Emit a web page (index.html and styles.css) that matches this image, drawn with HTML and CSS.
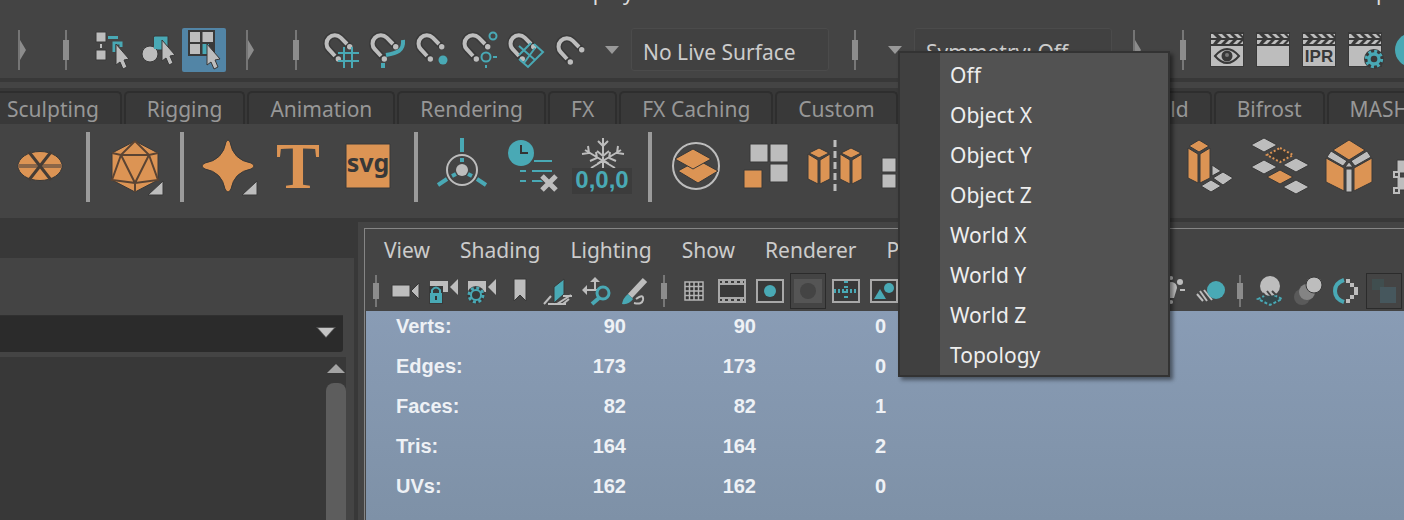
FILE: index.html
```html
<!DOCTYPE html>
<html lang="en">
<head>
<meta charset="utf-8">
<title>Modeling workspace</title>
<link rel="stylesheet" href="styles.css">
</head>
<body>
<svg class="defs" aria-hidden="true">
  <defs>
    <symbol id="cursor" viewBox="0 0 16 28"><path class="g edge" d="M1 1 14 16 9 17 12 24 8 26 5 19 1 22Z"/></symbol>
    <symbol id="magnet" viewBox="0 0 44 44">
      <path class="shade" d="M18 31 9 21.5A8.3 8.3 0 0 1 20.7 9.7L30 19"/>
      <path class="pipe" d="M15 28 9 21.5A8.3 8.3 0 0 1 20.7 9.7L27 16"/>
      <circle class="g" cx="18.3" cy="31" r="2.7"/><circle class="g" cx="29.7" cy="18.8" r="2.7"/>
    </symbol>
    <symbol id="clapper" viewBox="0 0 44 44">
      <path class="dark" d="M3 4H37V39H3Z"/>
      <path class="g" d="M4 18H36V38H4ZM4 6h2l4 4H4ZM11 6h4l4 4h-4ZM19 6h4l4 4h-4ZM27 6h4l4 4h-4ZM34 6h2v2ZM4 16v-4h5l-3 4ZM14 12h4l-4 4h-4ZM22 12h4l-4 4h-4ZM30 12h4l-4 4h-4ZM36 13v3h-3Z"/>
    </symbol>
    <symbol id="gear" viewBox="0 0 24 24">
      <circle cx="12" cy="12" r="9" class="dark"/>
      <circle cx="12" cy="12" r="9" fill="none" stroke="#49a9b5" stroke-width="4" stroke-dasharray="3.500 3.560"/>
      <circle cx="12" cy="12" r="6" fill="none" stroke="#49a9b5" stroke-width="4"/>
    </symbol>
    <symbol id="handle" viewBox="0 0 12 40"><path fill="#757575" d="M2 0h2v40H2Z"/><path fill="#8c8c8c" d="M4 10 10 20 4 30Z"/></symbol>
    <symbol id="grip" viewBox="0 0 12 40"><path fill="#777" d="M5 0h2v40H5Z"/><path fill="#8c8c8c" d="M3 10h6v20H3Z"/></symbol>
    <symbol id="smallgrip" viewBox="0 0 12 32"><path fill="#777" d="M5 0h2v32H5Z"/><path fill="#8c8c8c" d="M3 8h6v16H3Z"/></symbol>
    <symbol id="screen" viewBox="0 0 36 36"><path d="M5 7H31V29H5Z" fill="#393939" stroke="#a8a8a8" stroke-width="2"/></symbol>
    <symbol id="camera" viewBox="0 0 36 36"><path class="g" d="M5 8H23V19H5ZM25 14 33 6V22Z"/></symbol>
  </defs>
</svg>

<nav class="menubar" aria-label="Main menu"><a class="display" href="#">Display</a><a class="help" href="#">Help</a></nav>

<header class="status">
  <span class="cell lead"><svg class="bar"><use href="#handle"/></svg></span>
  <span class="cell"><svg class="bar"><use href="#grip"/></svg></span>
  <button class="cell" aria-label="Select by hierarchy"><svg class="tool" viewBox="0 0 44 44">
    <path class="g edge" d="M6 4H16V14H6ZM6 22H16V32H6Z"/><path class="g" d="M10 16h2v4h-2Z"/>
    <path class="t" d="M18 8H28V11H18Z"/><path d="M24 24V15H31V19" fill="none" stroke="#49a9b5" stroke-width="3"/>
    <use href="#cursor" x="25" y="15" width="16" height="28"/></svg></button>
  <button class="cell" aria-label="Select by object"><svg class="tool" viewBox="0 0 44 44">
    <path class="t edge" d="M18 8H32V22H18Z"/><circle class="g edge" cx="14" cy="26" r="8"/><path class="t" d="M18 9h13v12H18Z"/>
    <use href="#cursor" x="25" y="11" width="16" height="28"/></svg></button>
  <button class="cell" aria-label="Select by component" aria-pressed="true"><svg class="tool on" viewBox="0 0 44 44">
    <path class="dark" d="M6 2H33V28H6Z"/><path class="g" d="M8 4H18V14H8ZM20.500 4H31V14H20.500ZM8 16H18V26H8Z"/><path class="t" d="M20.500 16H27V26H20.500Z"/>
    <use href="#cursor" x="24" y="15" width="16" height="28"/></svg></button>
  <span class="cell"><svg class="bar"><use href="#handle"/></svg></span>
  <span class="cell"><svg class="bar"><use href="#grip"/></svg></span>
  <button class="cell" aria-label="Snap to grids"><svg class="tool" viewBox="0 0 44 44"><use href="#magnet"/><path class="line" d="M24 19V40M32 19V40M18 25H39M18 33H39"/></svg></button>
  <button class="cell" aria-label="Snap to curves"><svg class="tool" viewBox="0 0 44 44"><use href="#magnet"/><path d="M37 12C38 23 31 25 20 27M17 35V40" fill="none" stroke="#49a9b5" stroke-width="4"/></svg></button>
  <button class="cell" aria-label="Snap to points"><svg class="tool" viewBox="0 0 44 44"><use href="#magnet"/><circle class="t" cx="31" cy="32" r="4.500"/></svg></button>
  <button class="cell" aria-label="Snap to projected center"><svg class="tool" viewBox="0 0 44 44"><use href="#magnet"/><g class="line"><circle cx="35" cy="8" r="3.500"/><circle cx="28" cy="29" r="4.500"/><path d="M35 29h4M28 37v3"/></g></svg></button>
  <button class="cell" aria-label="Snap to view planes"><svg class="tool" viewBox="0 0 44 44"><use href="#magnet"/><path class="line" d="M30 16 39 24 24 39 15 31M15 18 31 32M27 15 15 27M31 20 20 35"/></svg></button>
  <button class="cell" aria-label="Make live"><svg class="tool" viewBox="0 0 44 44"><use href="#magnet" x="2" y="3"/></svg></button>
  <button class="drop" aria-label="Live surface options"><svg class="caret" viewBox="0 0 14 8"><path fill="#999" d="M0 0H14L7 8Z"/></svg></button>
  <input class="field" aria-label="Live surface" value="No Live Surface" readonly>
  <span class="cell"><svg class="bar"><use href="#grip"/></svg></span>
  <button class="drop" aria-label="Symmetry options"><svg class="caret" viewBox="0 0 14 8"><path fill="#999" d="M0 0H14L7 8Z"/></svg></button>
  <input class="field sym" aria-label="Symmetry" value="Symmetry: Off" readonly>
  <span class="cell"><svg class="bar"><use href="#handle"/></svg></span>
  <span class="cell"><svg class="bar"><use href="#grip"/></svg></span>
  <button class="cell" aria-label="Render view"><svg class="tool" viewBox="0 0 44 44"><use href="#clapper"/><path d="M8 28Q20 14 32 28Q20 42 8 28Z" fill="#bdbdbd" stroke="#383838" stroke-width="2"/><circle cx="20" cy="28" r="5.500" fill="#383838"/><circle cx="20" cy="27" r="2" fill="#777"/></svg></button>
  <button class="cell" aria-label="Render frame"><svg class="tool" viewBox="0 0 44 44"><use href="#clapper"/></svg></button>
  <button class="cell" aria-label="IPR render"><svg class="tool" viewBox="0 0 44 44"><use href="#clapper"/><text class="ipr" x="20" y="34">IPR</text></svg></button>
  <button class="cell" aria-label="Render settings"><svg class="tool" viewBox="0 0 44 44"><use href="#clapper"/><circle class="dark" cx="29" cy="31" r="10"/><use href="#gear" x="19" y="21" width="20" height="20"/></svg></button>
  <button class="cell" aria-label="Hypershade"><svg class="tool" viewBox="0 0 44 44"><circle class="t" cx="21" cy="22" r="17"/></svg></button>
</header>

<nav class="tabs" aria-label="Shelves">
  <button class="tab first">Sculpting</button>
  <button class="tab">Rigging</button>
  <button class="tab">Animation</button>
  <button class="tab">Rendering</button>
  <button class="tab">FX</button>
  <button class="tab">FX Caching</button>
  <button class="tab">Custom</button>
  <span class="tab covered"></span>
  <button class="tab">Arnold</button>
  <button class="tab">Bifrost</button>
  <button class="tab">MASH</button>
</nav>

<section class="shelf" aria-label="Shelf tools">
  <button aria-label="Disc"><svg viewBox="0 0 60 60"><ellipse class="o edge" cx="30" cy="29" rx="22" ry="14.500"/><path d="M8 29H52" stroke="#8b6648" stroke-width="4"/><path d="M19 15 41 43M41 15 19 43" stroke="#443c36" stroke-width="3"/></svg></button>
  <i></i>
  <button aria-label="Platonic solid"><svg viewBox="0 0 60 60"><path class="o edge" d="M31 4 54 16V43L31 55 8 43V16Z"/><path d="M17 18H45L31 46ZM31 4 17 18 8 16M31 4 45 18 54 16M17 18 8 43 31 46V55M45 18 54 43 31 46" fill="none" stroke="#5b4433" stroke-width="2"/><path class="g edge" d="M59 44V58H44Z"/></svg></button>
  <i></i>
  <button aria-label="Super shape"><svg viewBox="0 0 60 60"><path class="o edge" d="M28 5Q30 1 32 5Q35 23 53 26Q59 29 53 32Q36 35 33 52Q30 58 27 52Q24 35 7 32Q1 29 7 26Q25 23 28 5Z"/><path class="g edge" d="M59 44V58H44Z"/></svg></button>
  <button aria-label="Type"><svg viewBox="0 0 60 60"><text class="type" x="30" y="51">T</text></svg></button>
  <button aria-label="SVG"><svg viewBox="0 0 60 60"><path class="o edge" d="M8 7H52V51H8Z"/><text class="svgt" x="30" y="35">svg</text></svg></button>
  <i></i>
  <button aria-label="Center pivot"><svg viewBox="0 0 60 60"><circle cx="30" cy="33" r="15" fill="none" stroke="#bdbdbd" stroke-width="2"/><circle class="g" cx="30" cy="33" r="6"/><path d="M30 1V15M6 48 15 42M54 48 45 42M30 21V25M20 39 24 37M40 39 36 37" stroke="#49a9b5" stroke-width="4"/></svg></button>
  <button aria-label="Delete history"><svg viewBox="0 0 60 60"><circle class="t" cx="19" cy="16" r="13"/><path d="M19 8V16H26" fill="none" stroke="#333" stroke-width="2"/><path class="line" d="M32 24H50M18 34H24M30 34H50M18 44H24M30 44H42"/><path d="M39 38 55 54M55 38 39 54" stroke="#444" stroke-width="7"/><path d="M40 39 54 53M54 39 40 53" stroke="#bdbdbd" stroke-width="5"/></svg></button>
  <button aria-label="Freeze transformations"><svg viewBox="0 0 60 60"><g fill="none" stroke="#bdbdbd" stroke-width="2"><path d="M31 1V33M13 13 43 31M49 13 19 31M26 4 31 9 36 4M10 17 17 16 16 9M52 17 45 16 46 9M25 14 31 19 37 14M18 24 25 21 24 15M44 24 37 21 38 15M25 27 31 23 37 27"/></g><path fill="#3c3c3c" d="M0 31H60V57H0Z"/><text class="zeros" x="30" y="51">0,0,0</text></svg></button>
  <i></i>
  <button aria-label="Boolean"><svg viewBox="0 0 60 60"><circle cx="30" cy="29" r="23" fill="none" stroke="#bdbdbd" stroke-width="2"/><path class="o edge" d="M12 34 32 23 52 34 32 46Z"/><path class="o edge" d="M9 22 27 12 45 22 27 32Z"/></svg></button>
  <button aria-label="Separate"><svg viewBox="0 0 60 60"><path class="g edge" d="M14 7H32V25H14ZM34 7H52V25H34ZM34 27H52V45H34Z"/><path class="o edge" d="M8 33H26V51H8Z"/></svg></button>
  <button aria-label="Mirror"><svg viewBox="0 0 60 60"><path class="o edge" d="M2 17 12 23V47L2 42ZM14 23 24 17V42L14 47ZM3 16 13 11 23 16 13 21ZM34 17 44 23V47L34 42ZM46 23 56 17V42L46 47ZM35 16 45 11 55 16 45 21Z"/><path d="M29 3V56" stroke="#bdbdbd" stroke-width="3" stroke-dasharray="7 4"/></svg></button>
  <button aria-label="Extract"><svg viewBox="0 0 60 60"><path class="g edge" d="M6 21H20V35H6ZM6 37H20V51H6Z"/></svg></button>
  <span class="gap"></span>
  <i></i>
  <button aria-label="Extrude"><svg viewBox="0 0 60 60"><path class="g edge" d="M32 28 41 34 32 39ZM31 43 41 49 31 55 21 49ZM43 35 53 41 43 48 33 41Z"/><path class="o edge" d="M8 11 18 17V46L8 41ZM20 17 30 11V41L20 46ZM9 9 19 3 29 9 19 15Z"/></svg></button>
  <button aria-label="Bridge"><svg viewBox="0 0 60 60"><path class="g edge" d="M14 1 27 8 14 15 1 8ZM14 23 27 30 14 37 1 30ZM46 21 59 28 46 35 33 28ZM46 43 59 50 46 57 33 50Z"/><path class="o edge" d="M30 33 43 40 30 47 17 40Z"/><path d="M30 11 43 18 30 25 17 18Z" fill="#3c3732" stroke="#dc9454" stroke-width="2" stroke-dasharray="2 2"/></svg></button>
  <button aria-label="Bevel"><svg viewBox="0 0 60 60"><path class="o edge" d="M29 3 45 13 29 23 13 13ZM6 21 24 31V54L6 45ZM34 31 52 21V45L34 54Z"/><path class="g edge" d="M26 32H32V55H26ZM11 14 27 24 23 29 7 20ZM47 14 31 24 35 29 51 20ZM29 25 33 30H25Z"/></svg></button>
  <button aria-label="Lattice"><svg viewBox="0 0 60 60"><path class="g edge" d="M7 23H30V36H7ZM7 40H30V53H7Z"/><path d="M4 35H9V40H4ZM4 51H9V56H4Z" fill="#444" stroke="#bdbdbd" stroke-width="2"/></svg></button>
</section>

<main class="work">
  <aside class="side">
    <div class="sidehead"></div>
    <div class="sidebody">
      <select class="picker" aria-label="Tool settings"><option></option></select>
      <div class="list">
        <div class="scroll"><svg class="up" viewBox="0 0 18 9"><path fill="#a3a3a3" d="M0 9 9 0 18 9Z"/></svg><div class="thumb"></div></div>
      </div>
    </div>
  </aside>
  <section class="panel" aria-label="Perspective view">
    <div class="frame">
      <nav class="panelmenu" aria-label="Panel menu"><a href="#">View</a><a href="#">Shading</a><a href="#">Lighting</a><a href="#">Show</a><a href="#">Renderer</a><a href="#">Panels</a></nav>
      <div class="paneltools">
        <i><svg><use href="#smallgrip"/></svg></i>
        <button aria-label="Select camera"><svg viewBox="0 0 36 36"><path class="g edge" d="M4 12H22V24H4ZM23 18 31 10V26Z"/></svg></button>
        <button aria-label="Lock camera"><svg viewBox="0 0 36 36"><use href="#camera" x="-1"/><path class="dark" d="M3 13h14v18H3Z"/><path class="g" d="M4 8H22V12H4Z"/><path class="t" d="M4 20H16V30H4Z"/><path d="M6 20V17Q10 12 14 17V20" fill="none" stroke="#49a9b5" stroke-width="2"/><path d="M10 23v4" stroke="#333" stroke-width="2"/></svg></button>
        <button aria-label="Camera attributes"><svg viewBox="0 0 36 36"><use href="#camera" x="-1"/><circle class="dark" cx="12" cy="22" r="9"/><circle cx="12" cy="22" r="7" fill="none" stroke="#49a9b5" stroke-width="3" stroke-dasharray="3 2.500"/><circle cx="12" cy="22" r="5" fill="none" stroke="#49a9b5" stroke-width="2"/></svg></button>
        <button aria-label="Bookmarks"><svg viewBox="0 0 36 36"><path class="g edge" d="M12 6H24V28L18 22 12 28Z"/></svg></button>
        <button aria-label="Image plane"><svg viewBox="0 0 36 36"><path d="M4 31 11 23M8 31H14M17 31 31 22M23 31 29 26M13 31H26M23 23H32" stroke="#bdbdbd" stroke-width="2"/><path class="t edge" d="M14 14 24 6V21L14 30Z"/></svg></button>
        <button aria-label="2D pan and zoom"><svg viewBox="0 0 36 36"><path d="M8 17H20M17 8V18" stroke="#bdbdbd" stroke-width="2"/><path class="g" d="M4 17 9 12V22ZM17 4 22 9H12Z"/><circle cx="25" cy="20" r="6" fill="#444" stroke="#49a9b5" stroke-width="3"/><path d="M21 25 14 31" stroke="#49a9b5" stroke-width="4"/></svg></button>
        <button aria-label="Grease pencil"><svg viewBox="0 0 36 36"><path d="M29 7 14 23" stroke="#bdbdbd" stroke-width="6"/><path class="t" d="M12 21 17 26Q13 32 6 31Q7 25 12 21Z"/><path d="M20 26Q28 20 27 27Q26 32 18 30" fill="none" stroke="#bdbdbd" stroke-width="2"/></svg></button>
        <i><svg><use href="#smallgrip"/></svg></i>
        <button aria-label="Grid"><svg viewBox="0 0 36 36"><path d="M9 9H27V27H9ZM13.500 9V27M18 9V27M22.500 9V27M9 13.500H27M9 18H27M9 22.500H27" fill="#333" stroke="#b4b4b4" stroke-width="1.500"/></svg></button>
        <button aria-label="Film gate"><svg viewBox="0 0 36 36"><use href="#screen"/><path d="M5 11H31M5 25H31" stroke="#a8a8a8" stroke-width="2"/><path d="M8 8.500H30M8 27.500H30" stroke="#a8a8a8" stroke-width="3" stroke-dasharray="3 3"/></svg></button>
        <button aria-label="Resolution gate"><svg viewBox="0 0 36 36"><use href="#screen"/><circle class="t" cx="18" cy="18" r="6"/></svg></button>
        <button class="boxed" aria-label="Gate mask"><svg viewBox="0 0 36 36"><path fill="#555" d="M4 6H32V30H4Z"/><circle cx="18" cy="18" r="8" fill="#444"/></svg></button>
        <button aria-label="Field chart"><svg viewBox="0 0 36 36"><use href="#screen"/><path d="M6 18H30" stroke="#49a9b5" stroke-width="4" stroke-dasharray="2 2"/><path d="M18 8V28" stroke="#49a9b5" stroke-width="4" stroke-dasharray="2 3"/></svg></button>
        <button aria-label="Safe action"><svg viewBox="0 0 36 36"><use href="#screen"/><circle class="t" cx="23" cy="15" r="5"/><path class="t" d="M8 26 14 16 20 26Z"/></svg></button>
        <span class="gap"></span>
        <button aria-label="Use all lights"><svg viewBox="0 0 36 36"><path class="g" d="M12 14Q12 9 18 9Q23 10 23 15L20 25H15Z"/><g class="g"><circle cx="17" cy="5" r="2"/><circle cx="26" cy="9" r="3"/><circle cx="17" cy="29" r="2"/><path d="M26 16H31V18H26Z"/></g></svg></button>
        <button aria-label="Shadows"><svg viewBox="0 0 36 36"><path d="M5 21 11 28M8 18 15 28M12 17 20 27" stroke="#bdbdbd" stroke-width="2"/><circle class="t" cx="24" cy="17" r="9"/></svg></button>
        <i><svg><use href="#smallgrip"/></svg></i>
        <button aria-label="Ambient occlusion"><svg viewBox="0 0 36 36"><path d="M18 20 30 26 18 32 6 26Z" fill="#34474a" stroke="#49a9b5" stroke-width="2" stroke-dasharray="3 2"/><circle class="g" cx="18" cy="13" r="10"/><path d="M11 20 14 24M15 18 19 23M20 18 24 22" stroke="#444" stroke-width="2"/></svg></button>
        <button aria-label="Motion blur"><svg viewBox="0 0 36 36"><circle cx="12" cy="24" r="8" fill="#5a5a5a"/><circle cx="17" cy="19" r="8" fill="#848484"/><circle class="g edge" cx="24" cy="12" r="8"/></svg></button>
        <button aria-label="Anti-aliasing"><svg viewBox="0 0 36 36"><path d="M16 7Q7 10 7 18T16 29" fill="none" stroke="#49a9b5" stroke-width="4"/><path class="g" d="M18 6h4v4h-4ZM22 10h4v4h-4ZM26 14h4v8h-4ZM22 22h4v4h-4ZM18 26h4v4h-4Z"/></svg></button>
        <button class="boxed" aria-label="Isolate select"><svg viewBox="0 0 36 36"><path fill="#404e4f" d="M6 6H18V17H6Z"/><path fill="#46575d" d="M14 14H30V30H14Z"/></svg></button>
      </div>
      <div class="viewport">
        <table class="stats">
          <tr><th scope="row">Verts:</th><td>90</td><td>90</td><td>0</td></tr>
          <tr><th scope="row">Edges:</th><td>173</td><td>173</td><td>0</td></tr>
          <tr><th scope="row">Faces:</th><td>82</td><td>82</td><td>1</td></tr>
          <tr><th scope="row">Tris:</th><td>164</td><td>164</td><td>2</td></tr>
          <tr><th scope="row">UVs:</th><td>162</td><td>162</td><td>0</td></tr>
        </table>
      </div>
    </div>
  </section>
</main>

<div class="popup" role="menu" aria-label="Symmetry">
  <button role="menuitem">Off</button>
  <button role="menuitem">Object X</button>
  <button role="menuitem">Object Y</button>
  <button role="menuitem">Object Z</button>
  <button role="menuitem">World X</button>
  <button role="menuitem">World Y</button>
  <button role="menuitem">World Z</button>
  <button role="menuitem">Topology</button>
</div>
</body>
</html>
```
FILE: styles.css
```css
* { box-sizing: border-box; }
body {
  margin: 0;
  height: 100vh;
  overflow: hidden;
  display: flex;
  flex-direction: column;
  background: #444;
  color: #ccc;
  font: 21px/30px "Noto Sans", "Open Sans", sans-serif;
}
button, input, select { font: inherit; color: inherit; border: 0; padding: 0; background: none; }
a { color: inherit; text-decoration: none; }
svg { display: block; overflow: visible; }
.defs { position: absolute; width: 0; height: 0; }

.g { fill: #bdbdbd; }
.t { fill: #49a9b5; }
.o { fill: #dc9454; }
.dark { fill: #393939; }
.edge { stroke: #383838; stroke-width: 1; }
.line { fill: none; stroke: #49a9b5; stroke-width: 2; }
.shade { fill: none; stroke: #393939; stroke-width: 7; }
.pipe { fill: none; stroke: #bdbdbd; stroke-width: 4; }

.menubar { flex: none; height: 5px; overflow: hidden; display: flex; align-items: flex-end; line-height: 26px; color: #ddd; }
.menubar .display { margin-left: 562px; }
.menubar .help { margin-left: auto; padding-right: 15px; }

.status { flex: none; display: flex; align-items: center; height: 73px; padding: 18px 0 2px; }
.cell { flex: none; width: 46px; height: 44px; display: flex; align-items: center; justify-content: center; }
.cell.lead { width: 43px; }
.bar { width: 12px; height: 40px; }
.tool { flex: none; width: 44px; height: 44px; }
.tool.on { background: #5285a6; border-radius: 2px; }
.drop { flex: none; width: 33px; height: 44px; display: flex; align-items: center; justify-content: center; }
.caret { width: 14px; height: 8px; }
.field {
  flex: none;
  width: 198px;
  height: 43px;
  margin: 0 3px;
  padding: 4px 11px 0;
  background: #414141;
  border: 1px solid #4b4b4b;
  border-radius: 3px;
  outline: 0;
}
.field.sym { margin-right: 2px; }
.ipr { font: bold 17px "Liberation Sans", sans-serif; fill: #383838; text-anchor: middle; }

.tabs {
  flex: none;
  display: flex;
  gap: 2px;
  height: 46px;
  padding-top: 13px;
  background: linear-gradient(#383838 4px, #444 4px, #444 10px, #383838 10px);
  color: #979797;
}
.tab {
  flex: none;
  height: 33px;
  padding: 0 21px;
  border: 2px solid #2e2e2e;
  border-bottom: 0;
  border-radius: 5px 5px 0 0;
  background: #393939;
}
.tab.first { padding-left: 7px; border-left: 0; border-radius: 0 5px 0 0; }
.tab.covered { width: 198px; }

.shelf { flex: none; display: flex; height: 94px; padding: 8px 0 16px 5px; overflow: hidden; }
.shelf button { flex: none; width: 70px; height: 70px; display: flex; align-items: center; justify-content: center; }
.shelf svg { width: 60px; height: 60px; }
.shelf i { flex: none; width: 4px; height: 70px; margin: 0 9px 0 11px; background: #9b9b9b; }
.shelf .gap { flex: none; width: 210px; }
.type { font: bold 66px "Liberation Serif", serif; fill: #dc9454; text-anchor: middle; }
.svgt { font: bold 25px "Noto Sans", sans-serif; fill: #383838; text-anchor: middle; }
.zeros { font: bold 24px "Liberation Sans", sans-serif; fill: #49a9b5; text-anchor: middle; }

.work { flex: 1; min-height: 0; display: grid; grid-template-columns: 354px 1fr; gap: 4px; background: #383838; }
.side { display: flex; flex-direction: column; min-height: 0; }
.sidehead { height: 40px; }
.sidebody { flex: 1; display: flex; flex-direction: column; background: #444; padding: 57px 8px 0 0; }
.picker {
  flex: none;
  appearance: none;
  width: 343px;
  height: 37px;
  margin-bottom: 5px;
  border-top: 1px solid #303030;
  border-radius: 0 0 3px 0;
  background: #2b2b2b url("data:image/svg+xml,%3Csvg xmlns='http://www.w3.org/2000/svg' width='20' height='11'%3E%3Cpath d='M0 0H20L10 11Z' fill='%23555'/%3E%3Cpath d='M2 1H18L10 10Z' fill='%23c4c4c4'/%3E%3C/svg%3E") no-repeat right 7px top 11px;
}
.list { flex: 1; display: flex; justify-content: flex-end; background: #383838; }
.scroll { width: 20px; display: flex; flex-direction: column; align-items: center; padding-top: 7px; }
.up { width: 18px; height: 9px; margin-bottom: 10px; }
.thumb { flex: 1; width: 20px; border-radius: 8px 8px 0 0; background: #5d5d5d; }

.panel { min-width: 0; margin-top: 4px; padding: 6px 0 0 6px; background: #444; }
.frame { height: 100%; display: flex; flex-direction: column; border: 1px solid #858585; border-width: 1px 0 0 1px; }
.panelmenu { flex: none; display: flex; gap: 30px; height: 42px; padding: 6px 19px 0; }
.paneltools { flex: none; display: flex; align-items: center; height: 40px; padding-bottom: 1px; overflow: hidden; }
.paneltools button { flex: none; width: 38px; height: 36px; display: flex; justify-content: center; }
.paneltools button svg { flex: none; width: 36px; height: 36px; }
.paneltools .boxed svg { outline: 1px solid #2b2b2b; outline-offset: -1px; }
.paneltools i { flex: none; width: 22px; display: flex; justify-content: center; }
.paneltools i svg { width: 12px; height: 32px; }
.paneltools .gap { flex: none; width: 250px; }
.viewport { flex: 1; min-height: 0; overflow: hidden; margin-left: 1px; background: linear-gradient(#899cb5, #7e91a7); }

.stats { border-collapse: collapse; margin-left: 30px; color: #eef1f5; font: bold 20px/30px "Liberation Sans", sans-serif; }
.stats tr { height: 40px; vertical-align: top; }
.stats th { width: 100px; padding: 0; text-align: left; }
.stats td { width: 130px; padding: 0; text-align: right; }

.popup {
  position: absolute;
  left: 898px;
  top: 51px;
  width: 272px;
  padding: 2px 0 0;
  border: 2px solid #333;
  background: linear-gradient(90deg, #404040 40px, #525252 40px);
  box-shadow: 3px 3px 4px rgba(0, 0, 0, .45);
  color: #eee;
}
.popup button { display: block; width: 100%; height: 40px; padding-left: 50px; text-align: left; }
```
